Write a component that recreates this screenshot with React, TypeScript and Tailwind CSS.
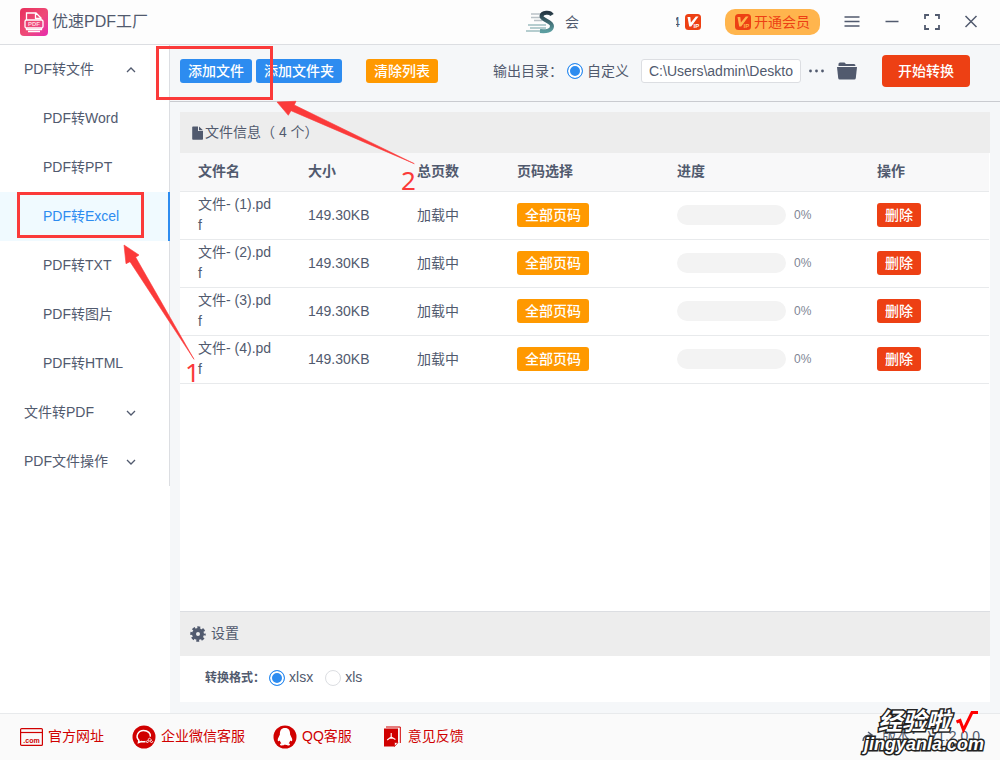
import type { ReactNode } from "react";

const convertItems = ["PDF转Word", "PDF转PPT", "PDF转Excel", "PDF转TXT", "PDF转图片", "PDF转HTML"];
const files = [1, 2, 3, 4].map((n) => ({ name: `文件- (${n}).pdf`, size: "149.30KB", pages: "加载中", progress: 0 }));

function VipIcon({ ink }: { ink: string }) {
  return (
    <svg width="16" height="16" viewBox="0 0 16 16" aria-hidden="true">
      <rect width="16" height="16" rx="3.5" fill="#ed4014" />
      <path d="M2.500 3h2.800l.6 5.500L10.800 2.500h2.700L6.200 12.500H4.200z" fill={ink} />
      <text x="8.500" y="13.700" fontSize="6" fontWeight="700" fontFamily="Liberation Sans, sans-serif" fill={ink}>IP</text>
    </svg>
  );
}

function Logo() {
  return (
    <svg width="28" height="28" viewBox="0 0 28 28" aria-hidden="true">
      <defs>
        <linearGradient id="logo" x1="0" y1="0" x2="1" y2="1">
          <stop offset="0" stopColor="#e8305c" />
          <stop offset=".55" stopColor="#ee4b78" />
          <stop offset="1" stopColor="#e62bb0" />
        </linearGradient>
      </defs>
      <rect width="28" height="28" rx="4" fill="url(#logo)" />
      <g fill="none" stroke="#fff" strokeWidth="1.300">
        <path d="M6.500 12V5h9.500l5 5v2M15.500 5v5.500H21" />
        <rect x="5" y="12" width="18" height="8" rx="1.500" />
        <path d="M6.500 20v1.500h15V20M8 23.500h12" />
      </g>
      <text x="14" y="18.300" textAnchor="middle" fontSize="6" fontWeight="700" fontFamily="Liberation Sans, sans-serif" fill="#ffd3df">PDF</text>
    </svg>
  );
}

function Avatar() {
  return (
    <svg width="29" height="24" viewBox="0 0 29 24" fill="none" aria-hidden="true">
      <defs>
        <linearGradient id="avatar" x1="0" y1="0" x2="0" y2="1">
          <stop offset="0" stopColor="#263743" />
          <stop offset="1" stopColor="#5b9da0" />
        </linearGradient>
      </defs>
      <path d="M5 4h14M5 7.500h10M8 10.500h8" stroke="#b9c1c6" strokeWidth="1.300" />
      <path d="M2 15h18M4 18h16M0 21h22" stroke="#9dbdc0" strokeWidth="1.300" />
      <path d="M26 5C24 1.500 16 2 15.500 6s10.500 5 10.500 10-6 5.500-12 5" stroke="url(#avatar)" strokeWidth="4" />
    </svg>
  );
}

function Chevron({ up = false }: { up?: boolean }) {
  return (
    <svg width="10" height="6" viewBox="0 0 10 6" fill="none" stroke="#515a6e" strokeWidth="1.300" aria-hidden="true">
      <path d={up ? "M1 5l4-4 4 4" : "M1 1l4 4 4-4"} />
    </svg>
  );
}

function Radio({ name, label, checked = false }: { name: string; label: string; checked?: boolean }) {
  return (
    <label className="flex items-center gap-1">
      <input
        type="radio"
        name={name}
        defaultChecked={checked}
        className="size-4 shrink-0 appearance-none rounded-full border border-[#dcdee2] bg-white checked:border-[#2d8cf0] checked:bg-[#2d8cf0] checked:shadow-[inset_0_0_0_2px_white]"
      />
      {label}
    </label>
  );
}

function SmallButton({ className, children }: { className: string; children: ReactNode }) {
  return (
    <button type="button" className={`h-6 rounded-[3px] px-2 text-sm leading-6 font-medium whitespace-nowrap text-white ${className}`}>
      {children}
    </button>
  );
}

function Sidebar() {
  return (
    <aside className="w-[170px] shrink-0 bg-white">
      <nav className="border-r border-[#dcdee2]">
        <button type="button" className="flex h-[49px] w-full items-center justify-between pr-[33px] pl-6">
          PDF转文件<Chevron up />
        </button>
        {convertItems.map((item) => (
          <a
            key={item}
            href="#"
            className={
              item === "PDF转Excel"
                ? "-mr-px flex h-[49px] items-center border-r-2 border-[#2d8cf0] bg-[#f0faff] pl-[43px] text-[#2d8cf0]"
                : "flex h-[49px] items-center pl-[43px]"
            }
          >
            {item}
          </a>
        ))}
        {["文件转PDF", "PDF文件操作"].map((item) => (
          <button key={item} type="button" className="flex h-[49px] w-full items-center justify-between pr-[33px] pl-6">
            {item}<Chevron />
          </button>
        ))}
      </nav>
    </aside>
  );
}

function Header() {
  return (
    <header className="flex h-[45px] shrink-0 items-center border-b border-[#dcdee2] bg-[#fdfdfd] pr-[22px] pl-5">
      <Logo />
      <h1 className="ml-1 text-base">优速PDF工厂</h1>
      <div className="ml-auto flex items-center">
        <Avatar />
        <span className="ml-[10px]">会</span>
        <span className="ml-[97px] flex w-1 justify-end overflow-hidden">4</span>
        <span className="ml-[5px]"><VipIcon ink="#fff" /></span>
        <button type="button" className="ml-6 flex h-[26px] items-center gap-[3px] rounded-[10px] bg-[#ffb54d] px-[10px] text-[#ed4014]">
          <VipIcon ink="#ffb54d" />开通会员
        </button>
        <div className="ml-6 flex items-center gap-6">
          <button type="button" aria-label="菜单">
            <svg width="16" height="16" viewBox="0 0 16 16" stroke="#515a6e" strokeWidth="1.500"><path d="M.5 3h15M.5 7.500h15M.5 12h15" /></svg>
          </button>
          <button type="button" aria-label="最小化">
            <svg width="16" height="16" viewBox="0 0 16 16" stroke="#515a6e" strokeWidth="1.500"><path d="M1.500 7.500h13" /></svg>
          </button>
          <button type="button" aria-label="全屏">
            <svg width="16" height="16" viewBox="0 0 16 16" fill="none" stroke="#515a6e" strokeWidth="1.800"><path d="M1 5V1h4M11 1h4v4M15 11v4h-4M5 15H1v-4" /></svg>
          </button>
          <button type="button" aria-label="关闭">
            <svg width="14" height="14" viewBox="0 0 14 14" stroke="#515a6e" strokeWidth="1.500"><path d="M1.500 1l11 11M12.500 1l-11 11" /></svg>
          </button>
        </div>
      </div>
    </header>
  );
}

function Toolbar() {
  return (
    <div className="flex h-[57px] items-center border-b border-[#c9cbd0] pr-[30px] pb-1 pl-[10px]">
      <SmallButton className="bg-[#2d8cf0]">添加文件</SmallButton>
      <SmallButton className="ml-1 bg-[#2d8cf0]">添加文件夹</SmallButton>
      <SmallButton className="ml-6 bg-[#ff9900]">清除列表</SmallButton>
      <div className="ml-auto flex items-center">
        <span className="mr-1">输出目录：</span>
        <Radio name="output" label="自定义" checked />
        <input
          aria-label="输出目录"
          defaultValue="C:\Users\admin\Deskto"
          className="ml-3 h-6 w-40 rounded-[3px] border border-[#dcdee2] bg-white px-[7px] text-sm outline-none"
        />
        <button type="button" aria-label="浏览" className="ml-2">
          <svg width="16" height="4" viewBox="0 0 16 4" fill="#515a6e"><circle cx="1.500" cy="2" r="1.400" /><circle cx="7.500" cy="2" r="1.400" /><circle cx="13.500" cy="2" r="1.400" /></svg>
        </button>
        <button type="button" aria-label="打开文件夹" className="ml-3">
          <svg width="20" height="18" viewBox="0 0 20 18" fill="#515a6e">
            <path d="M1.500 4V2q0-1.500 1.500-1.500h4.500L9 2h8q1.500 0 1.500 2z" />
            <path d="M0 5h20l-1.200 11q-.2 1.500-1.500 1.500H2.700q-1.300 0-1.500-1.500z" />
          </svg>
        </button>
        <button type="button" className="ml-[25px] h-8 rounded-[4px] bg-[#ed4014] px-4 font-medium text-white">开始转换</button>
      </div>
    </div>
  );
}

function FileTable() {
  return (
    <table className="w-full table-fixed border-collapse text-left">
      <colgroup>
        <col className="w-[110px]" />
        <col className="w-[109px]" />
        <col className="w-[100px]" />
        <col className="w-[160px]" />
        <col className="w-[200px]" />
        <col />
      </colgroup>
      <thead>
        <tr className="h-[38px] border-b border-[#e8eaec] bg-[#f8f8f9]">
          {["文件名", "大小", "总页数", "页码选择", "进度", "操作"].map((h) => (
            <th key={h} className="px-[18px] font-bold">{h}</th>
          ))}
        </tr>
      </thead>
      <tbody>
        {files.map((f) => (
          <tr key={f.name} className="h-12 border-b border-[#e8eaec]">
            <td className="px-[18px] break-all">{f.name}</td>
            <td className="px-[18px]">{f.size}</td>
            <td className="px-[18px]">{f.pages}</td>
            <td className="px-[18px]"><SmallButton className="bg-[#ff9900]">全部页码</SmallButton></td>
            <td className="px-[18px]">
              <div className="flex items-center gap-2 text-xs text-[#808695]">
                <div className="h-5 w-[109px] overflow-hidden rounded-full bg-[#f3f3f3]">
                  <div className="h-full bg-[#2d8cf0]" style={{ width: `${f.progress}%` }} />
                </div>
                {f.progress}%
              </div>
            </td>
            <td className="px-[18px]"><SmallButton className="bg-[#ed4014]">删除</SmallButton></td>
          </tr>
        ))}
      </tbody>
    </table>
  );
}

function Footer() {
  return (
    <footer className="relative flex h-[47px] shrink-0 items-center border-t border-[#e8eaec] bg-[#fafafa] pr-5 pb-px pl-5 text-[#d00000]">
      <a href="#" className="flex items-center gap-[5px]">
        <svg width="23" height="18" viewBox="0 0 23 18" fill="none" stroke="#d00000" strokeWidth="1.200">
          <rect x=".6" y=".6" width="21.800" height="16.800" rx="1" /><path d="M.6 4.500h21.800" />
          <text x="11.500" y="14.500" textAnchor="middle" fontSize="7" fontWeight="700" fontFamily="Liberation Sans, sans-serif" fill="#d00000" stroke="none">.com</text>
        </svg>
        官方网址
      </a>
      <a href="#" className="ml-7 flex items-center gap-[5px]">
        <svg width="24" height="24" viewBox="0 0 24 24" fill="none" stroke="#fff" strokeWidth="1.500">
          <circle cx="12" cy="12" r="11.500" fill="#d00000" stroke="none" />
          <path d="M13.500 16.500q-2 .7-4.200 0L6.500 17.500l.4-2.300C3 11.500 6 5.500 11.500 5.500c4.500 0 7.500 3 6.800 6.200" />
          <path d="M17.500 13l1.600 1.600-1.600 1.600-1.600-1.600zM15.300 15.500l1.200 1.200-1.200 1.200-1.200-1.200zM19.500 15.500l1.200 1.200-1.200 1.200-1.200-1.200z" strokeWidth=".9" />
        </svg>
        企业微信客服
      </a>
      <a href="#" className="ml-7 flex items-center gap-[5px]">
        <svg width="24" height="24" viewBox="0 0 24 24">
          <circle cx="12" cy="12" r="11.500" fill="#d00000" />
          <path d="M12 3c-3.700 0-5.300 2.700-5.100 6.500L5 13.500c-.7 2 .1 3.700 1.800 2 .2 1.200.8 2 1.600 2.700-2 .6-1.900 2.300.5 2.300 1.500 0 2.600-.4 3.100-.9.500.5 1.600.9 3.100.9 2.400 0 2.500-1.700.5-2.300.8-.7 1.400-1.500 1.600-2.700 1.700 1.700 2.500 0 1.800-2l-1.900-4C17.300 5.700 15.700 3 12 3z" fill="#fff" />
        </svg>
        QQ客服
      </a>
      <a href="#" className="ml-8 flex items-center gap-[7px]">
        <svg width="17" height="21" viewBox="0 0 17 21">
          <path d="M2 1h14.300v16" fill="none" stroke="#d00000" />
          <path d="M0 2.500h14v14L10.500 20.500H0z" fill="#d00000" />
          <path d="M10.500 20.500v-4H14z" fill="#fff" stroke="#d00000" strokeWidth=".7" />
          <path d="M7.200 7v4l-4 3M7.200 11l4.200 2.500M5 12.300h4.500" fill="none" stroke="#fff" strokeWidth="1.100" />
        </svg>
        意见反馈
      </a>
      <span className="ml-auto flex items-center gap-2 text-[#515a6e]">
        <svg width="12" height="12" viewBox="0 0 12 12" fill="none" stroke="#515a6e" strokeWidth="1.500"><path d="M1 10q0-6 8-6M6 1l4 3-3 3" /></svg>
        <span>版本： V1.2.0.0</span>
      </span>
      <div className="absolute right-4 bottom-[5px] flex flex-col items-start font-['Liberation_Sans','Noto_Sans_CJK_SC',sans-serif] font-bold text-white italic [-webkit-text-stroke:3px_#222] [paint-order:stroke_fill]">
        <div className="flex h-[23px] items-center gap-[5px] pl-[14px]">
          <span className="text-2xl leading-none">经验啦</span>
          <svg width="24" height="24" viewBox="0 0 24 24" fill="none" stroke="#f00" strokeWidth="3"><path d="M1.500 12l3.500-1.500L8.500 20 17 2.500h6" /></svg>
        </div>
        <span className="text-lg leading-[22px]">jingyanla.com</span>
      </div>
    </footer>
  );
}

function Annotations() {
  return (
    <div className="pointer-events-none absolute inset-0 font-['Noto_Sans',sans-serif] text-[26px] leading-[26px] text-[#fb3a3a]">
      <div className="absolute top-[46px] left-[156px] h-[54px] w-[117px] border-[3px] border-[#fb3a3a]" />
      <div className="absolute top-[192px] left-[17px] h-[46px] w-[127px] border-[3px] border-[#fb3a3a]" />
      <svg className="absolute top-0 left-0" width="420" height="370" viewBox="0 0 420 370" fill="#fb3a3a" stroke="#fb3a3a" strokeWidth=".6">
        <path d="M277 102L296 101.300 294.300 105 414.300 163.700 291 110.700 288.300 115.300z" />
        <path d="M124 245L139 255 135.700 257.300 194 359.300 130 261.700 126 263.700z" />
      </svg>
      <span className="absolute top-[167px] left-[401px]">2</span>
      <span className="absolute top-[359px] left-[185px]">1</span>
    </div>
  );
}

export default function App() {
  return (
    <div className="relative flex min-h-screen flex-col bg-[#f5f7f9] font-['Liberation_Sans','Noto_Sans_CJK_SC',sans-serif] text-sm leading-[21px] text-[#515a6e]">
      <Header />
      <div className="flex grow">
        <Sidebar />
        <main className="flex min-w-0 grow flex-col">
          <Toolbar />
          <div className="mx-[10px] mt-[10px] mb-[11px] flex grow flex-col bg-white">
            <h2 className="flex h-[41px] items-center gap-[2px] bg-[#ededed] pl-3">
              <svg width="11" height="14" viewBox="0 0 11 14" fill="#515a6e"><path d="M1 .5h5V5h5v8q0 .8-.8.800H1q-.8 0-.8-.8V1.300Q.2.500 1 .5zM7 .5L11 4.200H7z" /></svg>
              文件信息（ 4 个）
            </h2>
            <div className="grow pr-px"><FileTable /></div>
            <h2 className="flex h-[45px] items-center gap-[5px] border-t border-[#dcdee2] bg-[#ededed] pb-px pl-[10px]">
              <svg width="16" height="16" viewBox="0 0 16 16" fill="none" stroke="#515a6e">
                <circle cx="8" cy="8" r="4" strokeWidth="4" />
                <circle cx="8" cy="8" r="6.500" strokeWidth="2.500" strokeDasharray="2.900 2.205" strokeDashoffset="1.450" />
              </svg>
              设置
            </h2>
            <div className="flex h-[46px] items-center pb-[3px] pl-[25px]">
              <span className="mr-1 text-xs font-bold">转换格式：</span>
              <Radio name="format" label="xlsx" checked />
              <span className="ml-3"><Radio name="format" label="xls" /></span>
            </div>
          </div>
        </main>
      </div>
      <Footer />
      <Annotations />
    </div>
  );
}
